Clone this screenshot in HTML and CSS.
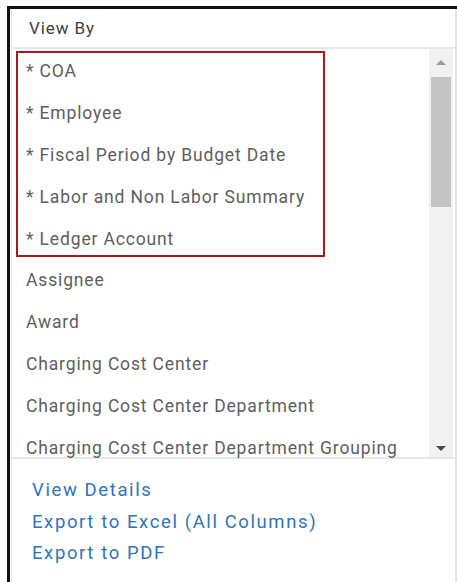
FILE: index.html
```html
<!DOCTYPE html>
<html lang="en">
<head>
<meta charset="utf-8">
<title>View By</title>
<link rel="stylesheet" href="styles.css">
</head>
<body>
<div class="frame">
  <div class="panel">
    <div class="panel-header">View By</div>
    <div class="list-area">
      <div class="items">
        <div class="required-group">
          <div class="row">* COA</div>
          <div class="row">* Employee</div>
          <div class="row">* Fiscal Period by Budget Date</div>
          <div class="row">* Labor and Non Labor Summary</div>
          <div class="row">* Ledger Account</div>
        </div>
        <div class="optional-group">
          <div class="row">Assignee</div>
          <div class="row">Award</div>
          <div class="row">Charging Cost Center</div>
          <div class="row">Charging Cost Center Department</div>
          <div class="row">Charging Cost Center Department Grouping</div>
        </div>
      </div>
      <div class="scrollbar">
        <svg class="arrow arrow-up" width="12" height="8" viewBox="0 0 12 8"><path d="M1 7 L6 2 L11 7 Z" fill="#9a9a9a"/></svg>
        <div class="thumb"></div>
        <div class="track-fill"></div>
        <svg class="arrow arrow-down" width="12" height="8" viewBox="0 0 12 8"><path d="M1 1 L6 6 L11 1 Z" fill="#4a4a4a"/></svg>
      </div>
    </div>
    <div class="actions">
      <a class="action" href="#">View Details</a>
      <a class="action" href="#">Export to Excel (All Columns)</a>
      <a class="action" href="#">Export to PDF</a>
    </div>
  </div>
</div>
</body>
</html>
```

FILE: styles.css
```css
html, body {
  margin: 0;
  padding: 0;
  background: #ffffff;
}

body {
  font-family: Roboto, "Noto Sans", "Liberation Sans", sans-serif;
  height: 582px;
  overflow: hidden;
}

.frame {
  margin: 6px 0 0 7px;
  border-top: 3px solid #111111;
  border-left: 3px solid #111111;
  height: 600px;
}

.panel {
  margin-left: 1px;
  border-left: 1px solid #e4e4e4;
  border-right: 2px solid #e2e2e2;
  height: 100%;
}

.panel-header {
  height: 38px;
  line-height: 38px;
  padding-left: 17px;
  font-size: 17px;
  letter-spacing: 0.9px;
  color: #404040;
  border-bottom: 2px solid #e8e8e8;
}

.list-area {
  display: flex;
  height: 408px;
  border-bottom: 2px solid #e6e6e6;
}

.items {
  flex: 1;
  padding-top: 2px;
}

.row {
  height: 42px;
  line-height: 42px;
  padding-left: 14px;
  font-size: 17.5px;
  letter-spacing: 0.85px;
  color: #5e5e5e;
  white-space: nowrap;
}

/* required dimensions, outlined in red */
.required-group {
  margin-left: 4px;
  width: 305px;
  height: 202px;
  border: 2px solid #ac171e;
}

.required-group .row {
  padding-left: 8px;
}

.required-group .row:first-child {
  margin-top: -3px;
}

.optional-group {
  margin-top: 2px;
}

.scrollbar {
  width: 24px;
  margin-right: 2px;
  background: #f1f1f1;
  display: flex;
  flex-direction: column;
  align-items: center;
}

.arrow {
  flex: none;
}

.arrow-up {
  margin: 9px 0 11px;
}

.arrow-down {
  margin: 0 0 4px;
}

.thumb {
  width: 20px;
  height: 130px;
  background: #c3c3c3;
}

.track-fill {
  flex: 1;
}

.actions {
  display: flex;
  flex-direction: column;
  padding: 16px 0 0 20px;
}

.action {
  font-size: 18.5px;
  letter-spacing: 1.6px;
  line-height: 31.5px;
  color: #2f73bd;
  text-decoration: none;
}
```
